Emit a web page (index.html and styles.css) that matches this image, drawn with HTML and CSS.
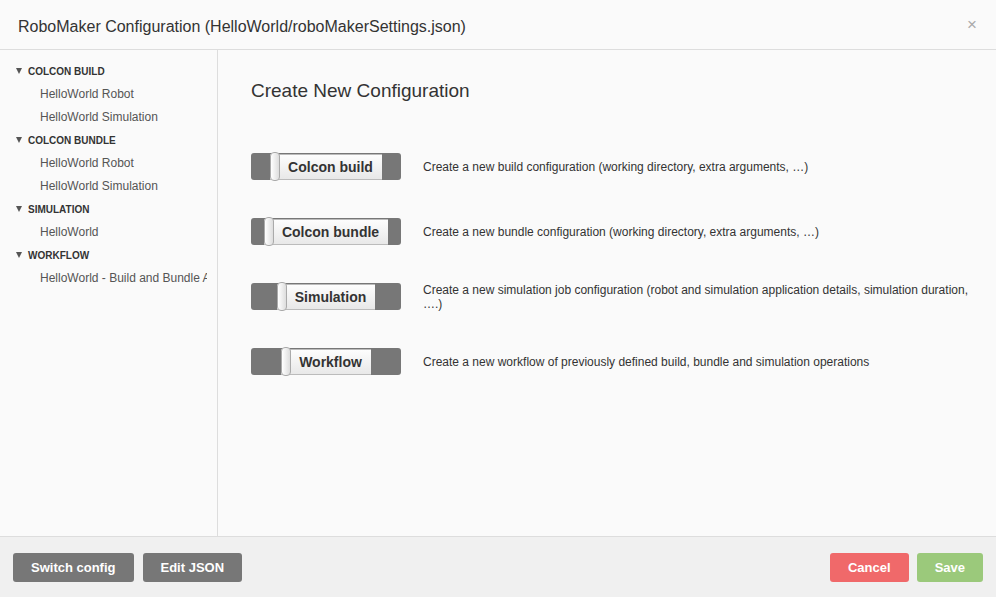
FILE: index.html
```html
<!DOCTYPE html>
<html lang="en">
  <head>
    <meta charset="UTF-8" />
    <title>RoboMaker Configuration</title>
    <link rel="stylesheet" href="styles.css">
  </head>
  <body>
    <div class="dialog">
      <div class="header">
        <div class="title">RoboMaker Configuration (HelloWorld/roboMakerSettings.json)</div>
        <div class="close">&times;</div>
      </div>
      <div class="content">
        <div class="sidebar">
          <div class="group">COLCON BUILD</div>
          <div class="item">HelloWorld Robot</div>
          <div class="item">HelloWorld Simulation</div>
          <div class="group">COLCON BUNDLE</div>
          <div class="item">HelloWorld Robot</div>
          <div class="item">HelloWorld Simulation</div>
          <div class="group">SIMULATION</div>
          <div class="item">HelloWorld</div>
          <div class="group">WORKFLOW</div>
          <div class="item">HelloWorld - Build and Bundle All</div>
        </div>
        <div class="main">
          <h2>Create New Configuration</h2>
          <div class="options">
            <div class="option">
              <div class="create-btn"><span class="face">Colcon build</span></div>
              <div class="desc">Create a new build configuration (working directory, extra arguments, &hellip;)</div>
            </div>
            <div class="option">
              <div class="create-btn"><span class="face">Colcon bundle</span></div>
              <div class="desc">Create a new bundle configuration (working directory, extra arguments, &hellip;)</div>
            </div>
            <div class="option">
              <div class="create-btn"><span class="face">Simulation</span></div>
              <div class="desc">Create a new simulation job configuration (robot and simulation application details, simulation duration, &hellip;.)</div>
            </div>
            <div class="option">
              <div class="create-btn"><span class="face">Workflow</span></div>
              <div class="desc">Create a new workflow of previously defined build, bundle and simulation operations</div>
            </div>
          </div>
        </div>
      </div>
      <div class="footer">
        <div class="left">
          <button class="btn gray">Switch config</button>
          <button class="btn gray">Edit JSON</button>
        </div>
        <div class="right">
          <button class="btn red">Cancel</button>
          <button class="btn green">Save</button>
        </div>
      </div>
    </div>
  </body>
</html>
```

FILE: styles.css
```css
* {
  box-sizing: border-box;
  margin: 0;
  padding: 0;
}
body {
  font-family: "Liberation Sans", Arial, sans-serif;
  color: #333;
  background: #fafafa;
  overflow: hidden;
}
.dialog {
  width: 996px;
  height: 597px;
  display: flex;
  flex-direction: column;
  background: #fafafa;
}
.header {
  height: 50px;
  flex: none;
  display: flex;
  align-items: center;
  justify-content: space-between;
  padding: 5px 18px 0 18px;
  border-bottom: 1px solid #ddd;
}
.title {
  font-size: 16px;
  color: #333;
}
.close {
  font-size: 17px;
  color: #aaa;
  margin-right: 1px;
  margin-top: -5px;
}
.content {
  flex: 1;
  display: flex;
  min-height: 0;
}
.sidebar {
  width: 218px;
  flex: none;
  border-right: 1px solid #ddd;
  padding-top: 10px;
  overflow: hidden;
}
.group,
.item {
  height: 23px;
  line-height: 23px;
  white-space: nowrap;
}
.group {
  display: flex;
  align-items: center;
  padding-left: 16px;
  font-size: 10px;
  font-weight: bold;
  color: #333;
}
.group::before {
  content: "";
  border-left: 3.5px solid transparent;
  border-right: 3.5px solid transparent;
  border-top: 6px solid #555;
  margin-right: 6px;
  margin-top: -1px;
}
.item {
  margin-right: 10px;
  padding-left: 40px;
  font-size: 12px;
  color: #555;
  overflow: hidden;
}
.main {
  flex: 1;
  padding: 30px 20px 0 33px;
}
.main h2 {
  font-size: 19px;
  font-weight: normal;
  color: #333;
  line-height: 22px;
  margin-bottom: 51px;
}
.options {
  display: flex;
  flex-direction: column;
  gap: 38px;
}
.option {
  display: flex;
  align-items: center;
  height: 27px;
  gap: 22px;
}
.create-btn {
  width: 150px;
  height: 27px;
  flex: none;
  background: #777;
  border-radius: 3px;
  display: flex;
  justify-content: center;
  align-items: center;
}
.face {
  display: flex;
  align-items: center;
  height: 26px;
  font-size: 14px;
  font-weight: bold;
  color: #333;
  background: linear-gradient(#fdfdfd, #e8e8e8);
  border-top: 1px solid #bbb;
  border-bottom: 1px solid #bbb;
  padding: 0 9px 0 0;
}
.face::before {
  content: "";
  width: 8px;
  height: 27px;
  margin-right: 8px;
  border: 1px solid #aaa;
  border-radius: 4px;
  background: linear-gradient(to right, #fff, #ddd);
}
.desc {
  font-size: 12px;
  line-height: 14px;
  color: #333;
}
.footer {
  height: 61px;
  flex: none;
  border-top: 1px solid #ddd;
  background: #f0f0f0;
  display: flex;
  justify-content: space-between;
  align-items: flex-start;
  padding: 16px 13px 0 13px;
}
.left,
.right {
  display: flex;
  gap: 9px;
}
.right {
  gap: 8px;
}
.btn {
  height: 29px;
  border: none;
  border-radius: 3px;
  color: #fff;
  font-family: "Liberation Sans", Arial, sans-serif;
  font-size: 13px;
  font-weight: bold;
  padding: 0 18px;
}
.gray {
  background: #777;
}
.red {
  background: #f0696a;
}
.green {
  background: #9bc97b;
}
```
